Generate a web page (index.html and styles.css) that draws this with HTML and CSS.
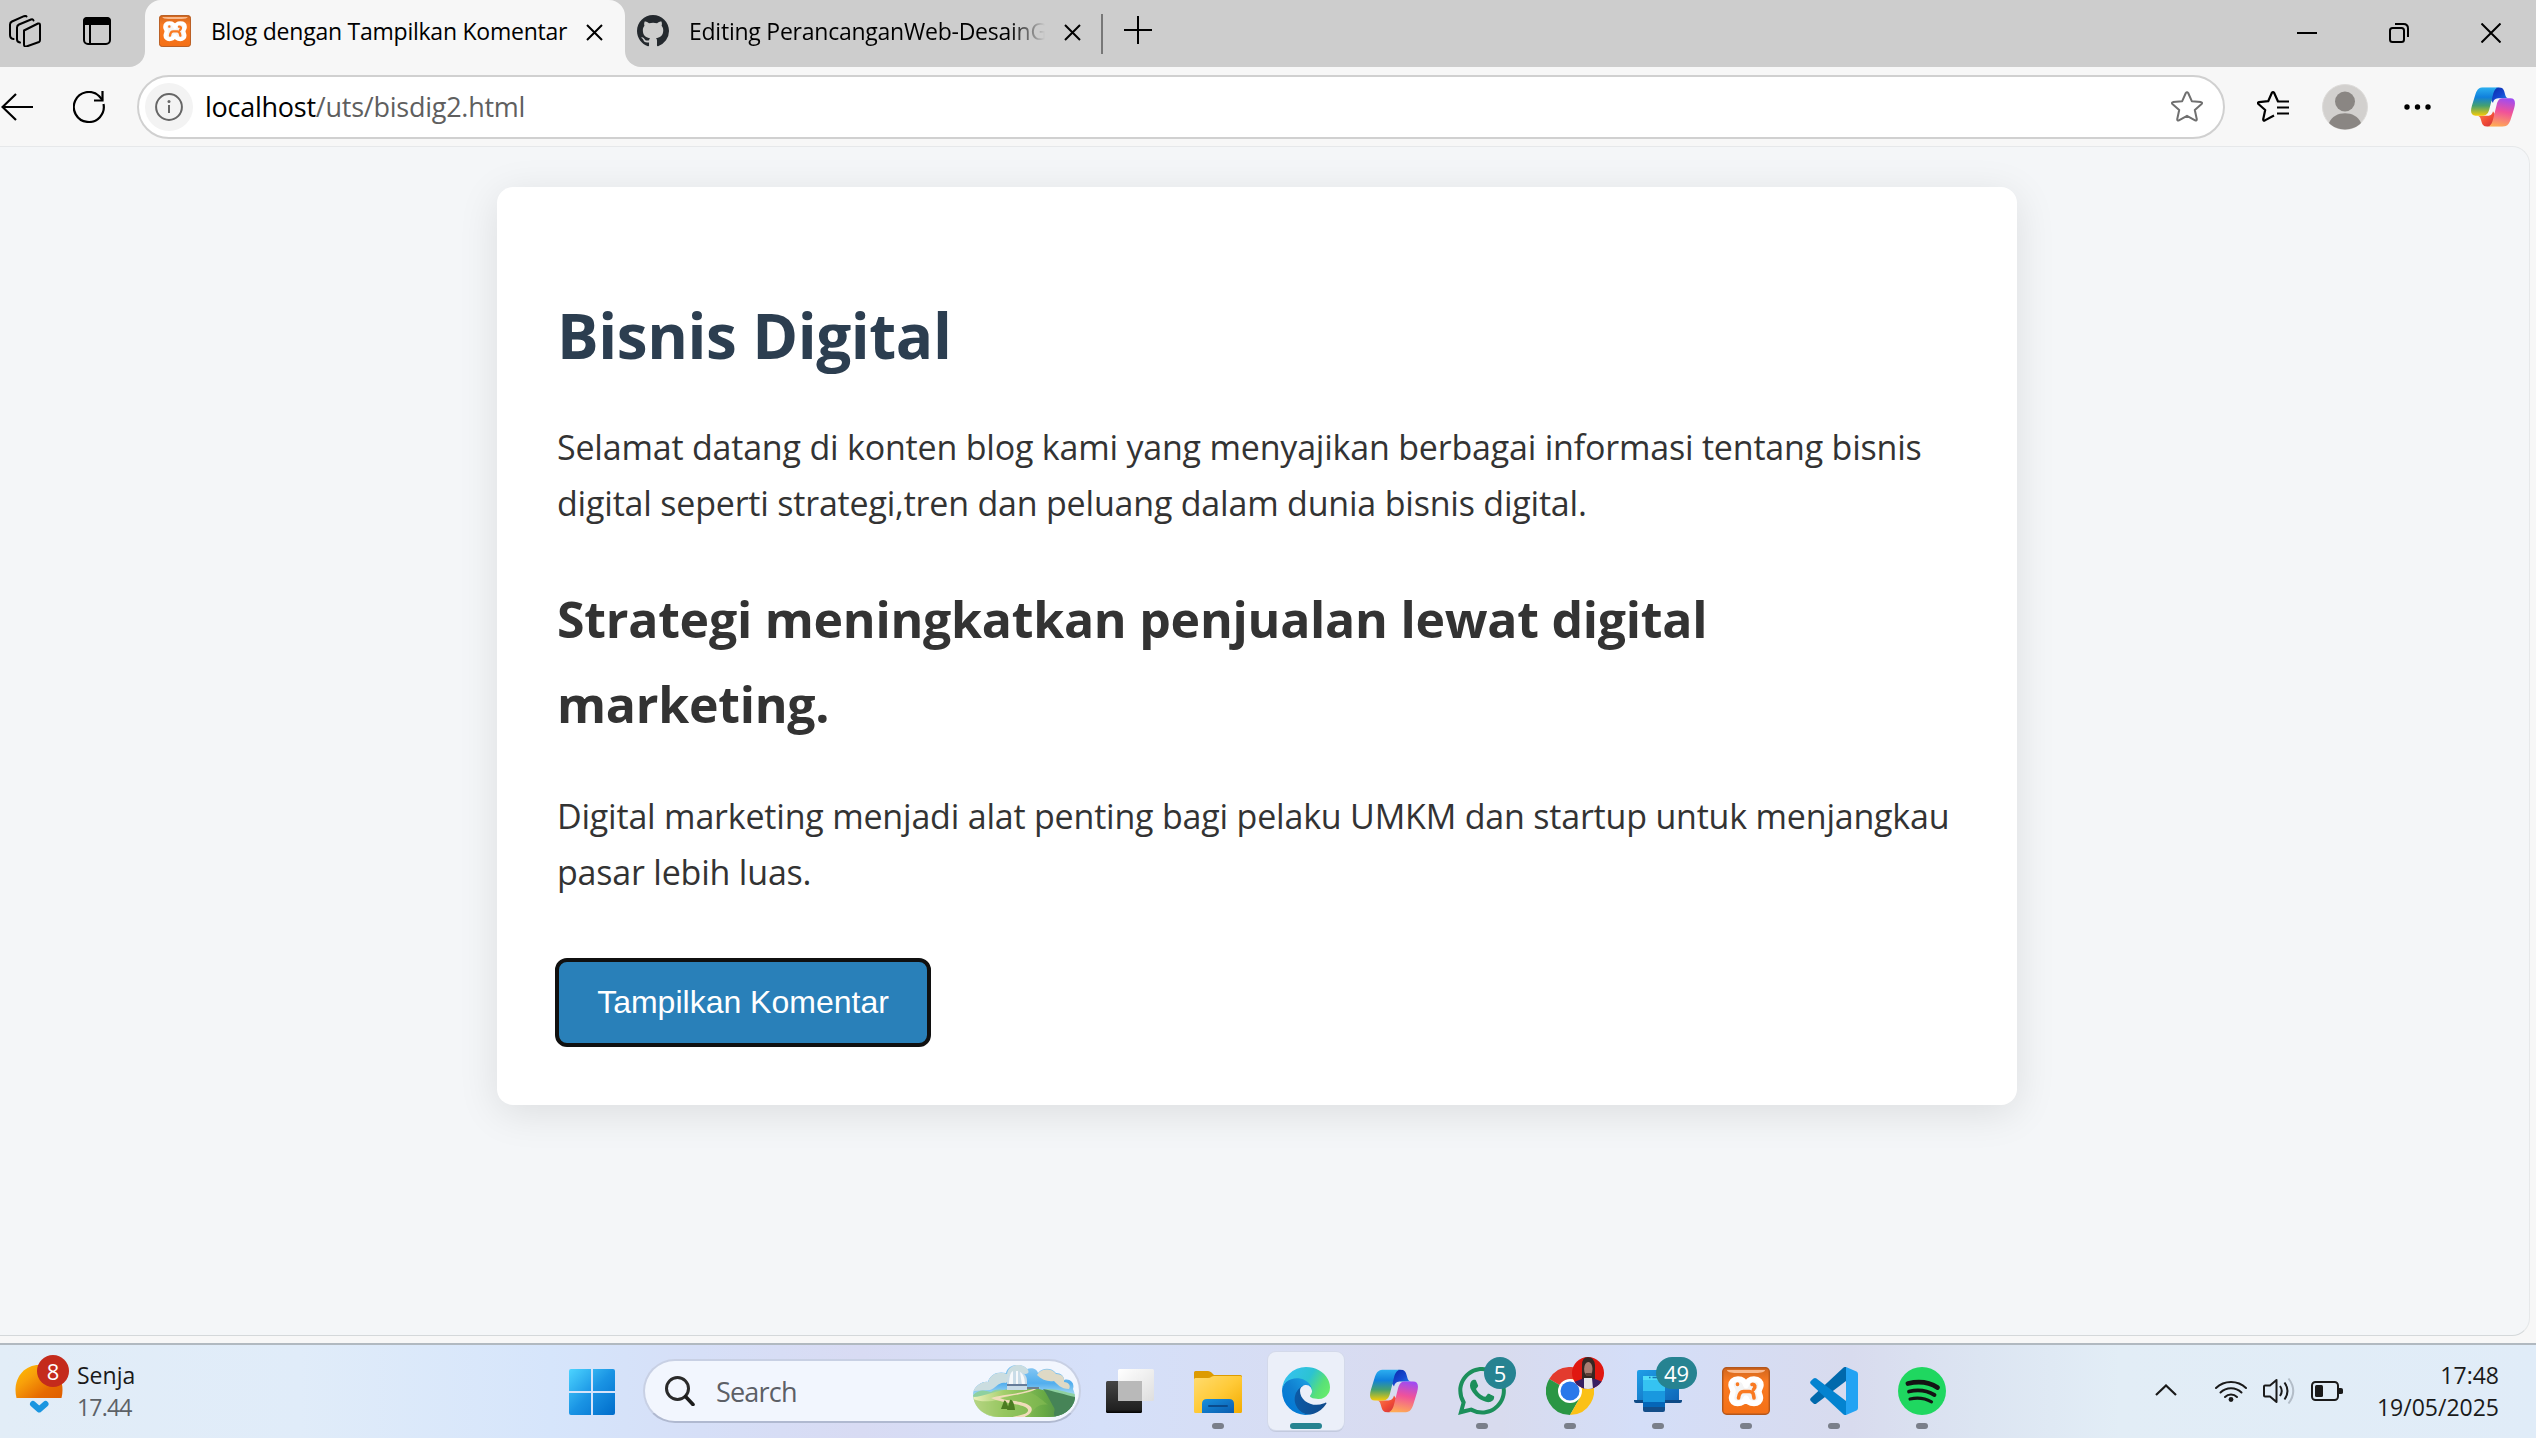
FILE: index.html
```html
<!DOCTYPE html>
<html lang="id">
<head>
<meta charset="utf-8">
<title>Blog dengan Tampilkan Komentar</title>
<link rel="stylesheet" href="styles.css">
</head>
<body>
<svg class="defs" aria-hidden="true">
  <defs>
    <linearGradient id="cpA" x1="0" y1="0" x2="0" y2="1"><stop offset="0" stop-color="#2cb0f0"/><stop offset=".35" stop-color="#1080dc"/><stop offset=".65" stop-color="#45a070"/><stop offset="1" stop-color="#f5cb08"/></linearGradient>
    <linearGradient id="cpB" x1="0" y1="0" x2="1" y2="1"><stop offset="0" stop-color="#0a2aa8"/><stop offset=".5" stop-color="#1547d0"/><stop offset="1" stop-color="#2a90f0"/></linearGradient>
    <linearGradient id="cpC" x1=".6" y1="0" x2=".4" y2="1"><stop offset="0" stop-color="#a14cf0"/><stop offset=".45" stop-color="#f0529a"/><stop offset="1" stop-color="#ffab55"/></linearGradient>
    <linearGradient id="cpD" x1="0" y1="0" x2="1" y2="1"><stop offset="0" stop-color="#ff8a50"/><stop offset=".6" stop-color="#f04a35"/><stop offset="1" stop-color="#c83040"/></linearGradient>
    <linearGradient id="xo" x1="0" y1="0" x2="0" y2="1"><stop offset="0" stop-color="#d0651c"/><stop offset=".3" stop-color="#f97a22"/><stop offset="1" stop-color="#f47016"/></linearGradient>
    <symbol id="copilot" viewBox="0 0 48 43">
      <path fill="url(#cpB)" d="M30 0C35 0 36 3 37 7s2 5 5 5H31c-4 0-6 1-7 5l-2-3C23 6 25 0 30 0z"/>
      <path fill="url(#cpD)" d="M18 43c-5 0-6-3-7-7s-2-5-5-5h11c4 0 6-1 7-5l2 3c-1 8-3 14-8 14z"/>
      <path fill="url(#cpA)" d="M14 0h17c-4 0-6 4-7 8l-4 16c-1 4-3 7-7 7H5c-5 0-6-4-4-11L5 7c2-5 4-7 9-7z"/>
      <path fill="url(#cpC)" d="M34 12h9c5 0 6 4 4 11l-4 13c-2 5-4 7-9 7H17c4 0 6-4 7-8l4-16c1-4 3-7 6-7z"/>
    </symbol>
    <symbol id="xampp" viewBox="0 0 48 48">
      <rect x=".7" y=".7" width="46.6" height="46.6" rx="4" fill="url(#xo)" stroke="#b4571c" stroke-width="1.4"/>
      <path d="M5 3h38c0 2-4 3-9 3H14C9 6 5 5 5 3z" fill="#f9b98c"/>
      <path d="M24 18.500c-1-4-4-6.500-8-6.500-5 0-7 3-7 6 0 2.500 2 4 2 6.500S9.500 28.500 9.500 31c0 3 2.500 5.500 6 5.500 4 0 7-1.500 8.500-5.500 1 4 4 5.500 8 5.500 4 0 6.500-2.500 6.500-5.500 0-2.500-1.500-4-1.500-6.500s2-4 2-6.500c0-3-2-6-7-6-4 0-7 2.500-8 6.500z" fill="#f4f4f4"/>
      <path d="M24 18.500c-1-4-4-6.500-8-6.500-5 0-7 3-7 6 0 2.500 2 4 2 6.500S9.500 28.500 9.500 31c0 3 2.500 5.500 6 5.500 4 0 7-1.500 8.500-5.500 1 4 4 5.500 8 5.500 4 0 6.500-2.500 6.500-5.500 0-2.500-1.500-4-1.500-6.500s2-4 2-6.500c0-3-2-6-7-6-4 0-7 2.500-8 6.500z" fill="none" stroke="#fff" stroke-width="5.500" stroke-linejoin="round"/>
      <path d="M15.500 17v.5M16.500 31c.5-4 1.500-6.500 5-6.500h6c4 0 4 3 4.500 6.500M30 17.500c3-.5 4 2.500 1.500 5" fill="none" stroke="#f97a22" stroke-width="3.600" stroke-linecap="round"/>
    </symbol>
  </defs>
</svg>

<header class="tabstrip">
  <div class="strip-left">
    <svg class="ico-workspaces" viewBox="0 0 32 32"><g fill="none" stroke="#000" stroke-width="2" stroke-linejoin="round" stroke-linecap="round"><path d="M15 15.500 29 8.500Q31 8 31 10V25q0 1.500-1 2L17.500 31.500Q15 32 15 29.500z"/><path d="M11 27.500Q8 27 8 24.500V12.500Q8 10.500 10 9.500L22 4.500q2-.8 2.500 1"/><path d="M4.500 24Q1 23.500 1 20V9.500Q1 7.500 3 6.500L15 1.200Q17 .6 17.500 1.500"/></g></svg>
    <svg class="ico-actions" viewBox="0 0 28 28"><rect x="1" y="1" width="26" height="26" rx="4" fill="none" stroke="#000" stroke-width="2"/><path d="M0 8V4a4 4 0 0 1 4-4h20a4 4 0 0 1 4 4v4z"/><path d="M7 8v19" stroke="#000" stroke-width="2"/></svg>
  </div>
  <div class="tab-slot">
    <div class="tab-active">
      <svg class="favicon" viewBox="0 0 48 48"><use href="#xampp"/></svg>
      <span class="tab-title">Blog dengan Tampilkan Komentar</span>
      <svg class="tab-close" viewBox="0 0 17 17"><path d="M1 1l15 15M16 1 1 16" stroke="#000" stroke-width="2"/></svg>
    </div>
  </div>
  <div class="strip-right">
    <svg class="favicon" viewBox="0 0 16 16"><path fill="#24292e" d="M8 0C3.580 0 0 3.580 0 8c0 3.540 2.290 6.530 5.470 7.590.4.070.55-.17.55-.38 0-.19-.01-.82-.01-1.490-2.010.37-2.530-.49-2.690-.94-.09-.23-.48-.94-.82-1.130-.28-.15-.68-.52-.01-.53.63-.01 1.080.58 1.230.82.72 1.210 1.870.87 2.330.66.070-.52.28-.87.51-1.070-1.780-.2-3.640-.89-3.640-3.950 0-.87.31-1.590.82-2.150-.08-.2-.36-1.020.08-2.120 0 0 .67-.21 2.200.82.64-.18 1.320-.27 2-.27s1.360.09 2 .27c1.530-1.040 2.200-.82 2.200-.82.44 1.100.16 1.920.08 2.120.51.56.82 1.270.82 2.150 0 3.070-1.870 3.750-3.650 3.950.29.25.54.73.54 1.480 0 1.070-.01 1.930-.01 2.200 0 .21.15.46.55.38A8.010 8.010 0 0 0 16 8c0-4.420-3.580-8-8-8z"/></svg>
    <span class="tab-title fade">Editing PerancanganWeb-DesainG</span>
    <svg class="tab-close" viewBox="0 0 17 17"><path d="M1 1l15 15M16 1 1 16" stroke="#000" stroke-width="2"/></svg>
    <span class="divider"></span>
    <svg class="ico-plus" viewBox="0 0 28 28"><path d="M14 0v28M0 14h28" stroke="#000" stroke-width="2"/></svg>
    <div class="window-controls">
      <svg viewBox="0 0 20 20"><path d="M0 10h20" stroke="#000" stroke-width="2"/></svg>
      <svg viewBox="0 0 20 20"><rect x="1" y="5" width="14" height="14" rx="2.500" fill="none" stroke="#000" stroke-width="2"/><path d="M6 1h8.500Q19 1 19 5.500V14" fill="none" stroke="#000" stroke-width="2"/></svg>
      <svg viewBox="0 0 20 20"><path d="M.5.5l19 19M19.500.5l-19 19" stroke="#000" stroke-width="2"/></svg>
    </div>
  </div>
</header>

<nav class="toolbar">
  <svg class="ico-back" viewBox="0 0 32 28"><path d="M32 14H1.500M15 1 1.500 14 15 27" fill="none" stroke="#000" stroke-width="2.200"/></svg>
  <svg class="ico-reload" viewBox="0 0 32 32"><path d="M30.500 13A15 15 0 1 1 26 5l3.500 4" fill="none" stroke="#000" stroke-width="2.200"/><path d="M29.500 0v9.500H21" fill="none" stroke="#000" stroke-width="2.200"/></svg>
  <div class="address">
    <span class="site-info"><svg viewBox="0 0 28 28"><circle cx="14" cy="14" r="12.900" fill="none" stroke="#666" stroke-width="2"/><path d="M14 12v8" stroke="#666" stroke-width="2"/><circle cx="14" cy="8.500" r="1.500" fill="#666"/></svg></span>
    <span class="url"><span class="host">localhost</span>/uts/bisdig2.html</span>
    <svg class="ico-star" viewBox="0 0 32 31"><path d="M14.800 2Q16 .4 17.200 2l3.600 8.200 9.200.9q1.800.5.6 1.900l-6.800 6 2 9.300q0 1.800-1.700 1.100L16 24.800 7.900 29.400q-1.700.7-1.700-1.100l2-9.300-6.800-6q-1.200-1.400.6-1.900l9.200-.9z" fill="none" stroke="#707070" stroke-width="2" stroke-linejoin="round"/></svg>
  </div>
  <svg class="ico-favs" viewBox="0 0 32 31"><path d="M17 24.500 7.900 29.400q-1.700.7-1.700-1.100l2-9.300-6.800-6q-1.200-1.400.6-1.900l9.200-.9L14.800 2Q16 .4 17.200 2l3.800 8.500H32M20 16.500h12M20 22.500h12" fill="none" stroke="#000" stroke-width="2.200" stroke-linejoin="round"/></svg>
  <svg class="ico-avatar" viewBox="0 0 46 46"><circle cx="23" cy="23" r="22.500" fill="#d2d0ce" stroke="#dddbd9"/><circle cx="23" cy="17.500" r="10" fill="#8a8683"/><path d="M7 39c5-13 27-13 32 0-8 8.500-24 8.500-32 0z" fill="#8a8683"/></svg>
  <svg class="ico-more" viewBox="0 0 28 6"><circle cx="3" cy="3" r="2.700"/><circle cx="13.500" cy="3" r="2.700"/><circle cx="24" cy="3" r="2.700"/></svg>
  <svg class="ico-copilot" viewBox="0 0 48 43"><use href="#copilot"/></svg>
</nav>

<div class="viewport">
  <main class="page">
    <article class="card">
      <h1>Bisnis Digital</h1>
      <p class="intro">Selamat datang di konten blog kami yang menyajikan berbagai informasi tentang bisnis digital seperti strategi,tren dan peluang dalam dunia bisnis digital.</p>
      <h2>Strategi meningkatkan penjualan lewat digital marketing.</h2>
      <p class="body">Digital marketing menjadi alat penting bagi pelaku UMKM dan startup untuk menjangkau pasar lebih luas.</p>
      <button class="toggle" type="button">Tampilkan Komentar</button>
    </article>
  </main>
</div>

<footer class="taskbar">
  <div class="weather">
    <div class="weather-icon">
      <svg viewBox="0 0 64 60"><defs><linearGradient id="sun" x1="0" y1="0" x2="1" y2=".9"><stop offset="0" stop-color="#ffc000"/><stop offset=".35" stop-color="#f8a00a"/><stop offset=".75" stop-color="#e66a00"/><stop offset="1" stop-color="#e06000"/></linearGradient></defs>
      <path d="M1.500 43C-3 25 8 10 24 10s27 15 22.500 33z" fill="url(#sun)"/><path d="M18 49l6.200 5.500L30.500 49" fill="none" stroke="#1b96e0" stroke-width="6" stroke-linecap="round" stroke-linejoin="round"/></svg>
      <span class="badge badge-red">8</span>
    </div>
    <div class="two-line"><span>Senja</span><span class="muted">17.44</span></div>
  </div>

  <svg class="start" viewBox="0 0 46 46"><defs><linearGradient id="win" gradientUnits="userSpaceOnUse" x1="0" y1="0" x2="46" y2="46"><stop offset="0" stop-color="#4cd4ff"/><stop offset=".5" stop-color="#1a94e4"/><stop offset="1" stop-color="#006cca"/></linearGradient></defs><path fill="url(#win)" d="M2 0h20v22H0V2Q0 0 2 0zM24 0h20q2 0 2 2v20H24zM0 24h22v22H2q-2 0-2-2zM24 24h22v20q0 2-2 2H24z"/></svg>

  <div class="search">
    <svg class="ico-search" viewBox="0 0 30 30"><circle cx="12.500" cy="12.500" r="11" fill="none" stroke="#2a2a2a" stroke-width="3"/><path d="M20.500 20.500l7.500 8" stroke="#1c1c1c" stroke-width="3.600" stroke-linecap="round"/></svg>
    <span>Search</span>
    <svg class="scene" viewBox="0 0 102 52">
      <defs>
        <clipPath id="sc"><path d="M0 28C2 20 10 16 15 17 17 9 25 6 33 8 35-2 50-2 54 4c5-2 10 0 11 4 5-6 14-5 18 0 5 0 8 3 8 7 6-2 11 3 9 9 2 4 2 8 2 10-2 10-12 18-26 18H26C11 52 0 42 0 28z"/></clipPath>
        <linearGradient id="sky" x1="0" y1="0" x2="0" y2="1"><stop offset="0" stop-color="#8ccaf4"/><stop offset=".35" stop-color="#52aeee"/><stop offset=".65" stop-color="#bfe6f2"/></linearGradient>
        <linearGradient id="hill" x1="0" y1="0" x2="1" y2="0"><stop offset="0" stop-color="#eef0bc"/><stop offset=".3" stop-color="#a4cf6c"/><stop offset=".7" stop-color="#67a944"/><stop offset="1" stop-color="#3f7a50"/></linearGradient>
      </defs>
      <g clip-path="url(#sc)">
        <path fill="url(#sky)" d="M0 0h102v52H0z"/>
        <path d="M0 26c4-10 10-9 15-9 2-9 12-11 19-8 2-12 19-11 21-4 2 4-2 5-7 3-8-1-10 6-15 10-7-2-10 5-16 7z" fill="#cbdde0"/>
        <path d="M64 10c4-7 15-7 19-1 7 0 9 4 8 8 5 0 7 4 5 7-8 0-12-5-15-8-6 1-12-1-17-6z" fill="#ded9c5"/>
        <path d="M0 30c8-7 12-4 18-3 8-5 14-1 22 0l14-3c10 3 14 2 20 0 10 0 18 3 28 5v23H0z" fill="#8ed0a0"/>
        <path d="M0 32c10 0 26-8 40-8h26c12 3 26 8 36 20v8H0z" fill="url(#hill)"/>
        <path d="M70 24c10 2 23 6 32 8v20H82c-3-6 2-6-2-11-4-7-6-12-10-17z" fill="#468457"/>
        <path d="M50 25c16 4 22 14 26 15-9-2-16 3-19 12H26C8 50 2 42 0 34c12 5 28 2 50-9z" fill="#8bbf55" opacity=".55"/>
        <path d="M64 22c-12 7-35 7-46 11 8 5 39 6 37 13-2 5-14 4-20 8h12c8-3 14-7 11-12-5-7-28-6-31-9 12-3 30-4 40-11z" fill="#f0dcba"/>
        <path d="M34 25v-9c0-13 20-13 20 0v9z" fill="#c9dce8"/><path d="M36 20c0-6 1-13 4-14v15zM47 7c4 2 5 8 5 13h-3zM43 6h2v14h-2z" fill="#f6f8fa"/><path d="M34 19h20v2H34z" fill="#667c9a"/><path d="M54 22h12v2H54z" fill="#6d8090"/>
        <path d="M31 36c2-2 3 3 5 8h-8zM37 35c2-2 5 5 5 10h-8z" fill="#4b7c21"/>
      </g>
    </svg>
  </div>

  <div class="apps">
    <div class="app"><svg viewBox="0 0 48 48"><defs><linearGradient id="tvd" x1="0" y1="0" x2="0" y2="1"><stop offset="0" stop-color="#454545"/><stop offset=".9" stop-color="#202020"/><stop offset="1" stop-color="#000"/></linearGradient><linearGradient id="tvl" x1="0" y1="0" x2="1" y2="1"><stop offset="0" stop-color="#fff"/><stop offset="1" stop-color="#dedede"/></linearGradient></defs><rect y="14" width="36" height="32" rx="1.500" fill="url(#tvd)"/><rect x="12" y="2" width="36" height="32" rx="1.500" fill="url(#tvl)"/><path d="M12 14h24v20H13.500q-1.500 0-1.500-1.500z" fill="#b9b9b9"/></svg></div>

    <div class="app running"><svg viewBox="0 0 48 48"><defs><linearGradient id="fd" x1="0" y1="0" x2="1" y2="1"><stop offset="0" stop-color="#ffdc70"/><stop offset=".5" stop-color="#ffca38"/><stop offset="1" stop-color="#f3ab00"/></linearGradient><linearGradient id="fb" x1="0" y1="0" x2="1" y2="1"><stop offset="0" stop-color="#1790de"/><stop offset="1" stop-color="#0a5cae"/></linearGradient></defs><path d="M0 14V5.500Q0 4 1.500 4H14q2 0 3.500 1.500L20 8h26.500q1.500 0 1.500 1.500V14z" fill="#dd9b00"/><path d="M0 12.500Q0 11 1.500 11H14q2 0 3.500-1.200T21 9h25.500q1.500 0 1.500 1.500v34q0 1.500-1.500 1.500h-45Q0 46 0 44.500z" fill="url(#fd)"/><path d="M8 46V37q0-5 5-5h22q5 0 5 5v9z" fill="url(#fb)"/><path d="M15 39h18" stroke="#0a4b8c" stroke-width="2" stroke-linecap="round"/></svg></div>

    <div class="app current"><svg viewBox="0 0 256 256"><defs><linearGradient id="e1" x1=".1" x2="1" y1=".7" y2=".7"><stop offset="0" stop-color="#0c59a4"/><stop offset="1" stop-color="#114a8b"/></linearGradient><linearGradient id="e2" x1=".9" y1=".2" x2=".2" y2=".9"><stop offset="0" stop-color="#1b9de2"/><stop offset=".5" stop-color="#1080d0"/><stop offset="1" stop-color="#0078d7"/></linearGradient><linearGradient id="e3" x1="0" y1=".3" x2="1" y2=".7"><stop offset="0" stop-color="#35c1f1"/><stop offset=".5" stop-color="#2cc3d2"/><stop offset=".8" stop-color="#58e078"/><stop offset="1" stop-color="#66eb6e"/></linearGradient></defs><g transform="translate(-4.630 -4.920)"><path fill="url(#e1)" d="M235.680 195.460a93.730 93.730 0 0 1-10.540 4.710 101.870 101.870 0 0 1-35.900 6.460c-47.320 0-88.540-32.550-88.540-74.320A31.480 31.480 0 0 1 117.130 105c-42.800 1.800-53.800 46.400-53.800 72.530 0 73.880 68.090 81.370 82.760 81.370 7.910 0 19.840-2.300 27-4.560l1.310-.44a128.340 128.340 0 0 0 66.600-52.800 4 4 0 0 0-5.320-5.640z"/><path fill="url(#e2)" d="M110.340 246.340A79.200 79.200 0 0 1 87.600 225a80.720 80.720 0 0 1 29.530-120c3.120-1.470 8.450-4.130 15.540-4a32.350 32.350 0 0 1 25.690 13 31.880 31.880 0 0 1 6.360 18.660c0-.21 24.460-79.600-80-79.600-43.900 0-80 41.660-80 78.210a130.150 130.150 0 0 0 12.110 56 128 128 0 0 0 156.380 67.110 75.550 75.550 0 0 1-62.780-8z"/><path fill="url(#e3)" d="M156.940 153.780c-.81 1.050-3.300 2.500-3.300 5.660 0 2.610 1.700 5.120 4.720 7.230 14.380 10 41.490 8.680 41.560 8.680a59.560 59.560 0 0 0 30.270-8.350 61.380 61.380 0 0 0 30.430-52.880c.26-22.410-8-37.310-11.340-43.910-21.190-41.450-66.930-65.290-116.670-65.290a128 128 0 0 0-128 126.200c.48-36.540 36.800-66.050 80-66.050 3.500 0 23.460.34 42 10.070 16.340 8.580 24.900 18.940 30.850 29.210 6.180 10.670 7.280 24.150 7.280 29.520s-2.740 13.330-7.800 19.910z"/></g></svg></div>

    <div class="app"><svg viewBox="0 0 48 43"><use href="#copilot"/></svg></div>

    <div class="app running"><svg viewBox="0 0 24 24"><path fill="#1c8f5b" d="M17.472 14.382c-.297-.149-1.758-.867-2.030-.967-.273-.099-.471-.148-.670.150-.197.297-.767.966-.940 1.164-.173.199-.347.223-.644.075-.297-.150-1.255-.463-2.390-1.475-.883-.788-1.480-1.761-1.653-2.059-.173-.297-.018-.458.130-.606.134-.133.298-.347.446-.520.149-.174.198-.298.298-.497.099-.198.050-.371-.025-.520-.075-.149-.669-1.612-.916-2.207-.242-.579-.487-.500-.669-.510-.173-.008-.371-.010-.570-.010-.198 0-.520.074-.792.372-.272.297-1.040 1.016-1.040 2.479 0 1.462 1.065 2.875 1.213 3.074.149.198 2.096 3.200 5.077 4.487.709.306 1.262.489 1.694.625.712.227 1.360.195 1.871.118.571-.085 1.758-.719 2.006-1.413.248-.694.248-1.289.173-1.413-.074-.124-.272-.198-.570-.347m-5.421 7.403h-.004a9.870 9.870 0 0 1-5.031-1.378l-.361-.214-3.741.982.998-3.648-.235-.374a9.860 9.860 0 0 1-1.510-5.260c.001-5.450 4.436-9.884 9.888-9.884 2.640 0 5.122 1.030 6.988 2.898a9.825 9.825 0 0 1 2.893 6.994c-.003 5.450-4.437 9.884-9.885 9.884m8.413-18.297A11.815 11.815 0 0 0 12.050 0C5.495 0 .160 5.335.157 11.892c0 2.096.547 4.142 1.588 5.945L.057 24l6.305-1.654a11.882 11.882 0 0 0 5.683 1.448h.005c6.554 0 11.890-5.335 11.893-11.893a11.821 11.821 0 0 0-3.480-8.413z"/></svg><span class="badge badge-teal">5</span></div>

    <div class="app running"><svg viewBox="0 0 48 48"><path d="M24 24 3.200 12A24 24 0 0 1 44.800 12z" fill="#e33b2e"/><path d="M3.200 12A24 24 0 0 0 24 48l10.400-18L24 24z" fill="#2a9644"/><path d="M24 48A24 24 0 0 0 44.800 12H24l10.400 18z" fill="#fbc116"/><path d="M3.200 12 13.600 30 24 24V12z" fill="#e33b2e" opacity="0"/><circle cx="24" cy="24" r="12" fill="#fff"/><circle cx="24" cy="24" r="9.500" fill="#2a78ea"/></svg>
      <svg class="profile" viewBox="0 0 32 32"><defs><clipPath id="pc"><circle cx="16" cy="16" r="16"/></clipPath></defs><g clip-path="url(#pc)"><path d="M0 0h32v32H0z" fill="#e01710"/><path d="M10 22V8q0-8 6-8t7 8v14z" fill="#352723"/><path d="M2 25l8-3h13l8 3v7H2z" fill="#371f63"/><path d="M12 21h8l1 11h-9z" fill="#e6e4ea"/><ellipse cx="16.300" cy="12" rx="4.200" ry="7" fill="#a97d72"/><path d="M13.500 16h6v3h-5z" fill="#5c3d36"/></g></svg></div>

    <div class="app running"><svg viewBox="0 0 48 48"><defs><linearGradient id="pl" x1="0" y1="0" x2="1" y2="1"><stop offset="0" stop-color="#1f9fe8"/><stop offset="1" stop-color="#0f66b8"/></linearGradient></defs><path d="M3 5q0-2 2-2h38q2 0 2 2v28H3z" fill="url(#pl)"/><path d="M0 33h48v1q0 2-2 2H2q-2 0-2-2z" fill="#0e4a86"/><path d="M9 9h22v15H9z" fill="#35c3f2"/><path d="M9 9h22v4H9z" fill="#4fdcf8"/><path d="M9 24h22v11H9z" fill="#1998df"/><path d="M9 35h22v5H9z" fill="#0566b8"/><path d="M9 40h22v3q0 2-2 2H11q-2 0-2-2z" fill="#134e8a"/><path d="M15 10.500h1.500M18.500 10.500H24" stroke="#1777b8" stroke-width="1.300"/></svg><span class="badge badge-teal badge-wide">49</span></div>

    <div class="app running"><svg viewBox="0 0 48 48"><use href="#xampp"/></svg></div>

    <div class="app running"><svg viewBox="0 0 48 48"><path d="M36 0v14L6.500 36.500q-1.500 1-3 0L.8 34q-1.300-1.500 0-3L33 1q1.500-1.300 3-1z" fill="#0069ac"/><path d="M36 48V34L6.500 11.500q-1.500-1-3 0L.8 14q-1.300 1.500 0 3L33 47q1.500 1.300 3 1z" fill="#0383d0"/><path d="M36 0l10.500 4.500Q48 5.300 48 7v34q0 1.700-1.500 2.500L36 48z" fill="#23a3f3"/></svg></div>

    <div class="app running"><svg viewBox="0 0 48 48"><circle cx="24" cy="24" r="24" fill="#1fd760"/><g fill="none" stroke="#141414" stroke-linecap="round"><path d="M10 16.500c11-2.500 21-1.500 29.500 4" stroke-width="4.800"/><path d="M11 24.500c9-2 18-1 25.500 3.500" stroke-width="3.800"/><path d="M12 32c8-1.800 15-.8 21.500 2.800" stroke-width="3.200"/></g></svg></div>
  </div>

  <div class="tray">
    <svg class="t-up" viewBox="0 0 22 12"><path d="M1 11 11 1.500 21 11" fill="none" stroke="#1a1a1a" stroke-width="2.200"/></svg>
    <svg class="t-wifi" viewBox="0 0 32 23"><g fill="none" stroke="#1a1a1a" stroke-width="2" stroke-linecap="round"><path d="M1 9a21.500 21.500 0 0 1 30 0"/><path d="M5.500 13.500a15 15 0 0 1 21 0"/><path d="M10 18a8.500 8.500 0 0 1 12 0"/></g><circle cx="16" cy="20.500" r="2.400" fill="#1a1a1a"/></svg>
    <svg class="t-vol" viewBox="0 0 32 28"><g fill="none" stroke="#1a1a1a" stroke-width="2" stroke-linejoin="round"><path d="M1 9.500q0-1 1-1h5L13.500 3v22L7 19.500H2q-1 0-1-1z"/><path d="M17 9q3.500 5 0 10M21.500 5.500q6 8.500 0 17"/><path d="M25.500 1.500q9.500 12.500 0 25" stroke="#b3bdc8"/></g></svg>
    <svg class="t-bat" viewBox="0 0 32 20"><rect x="1" y="1" width="26" height="18" rx="3.500" fill="none" stroke="#1a1a1a" stroke-width="2"/><rect x="4" y="4" width="8" height="12" rx="1.500" fill="#1a1a1a"/><path d="M28 7h2q2 0 2 1.500v3q0 1.500-2 1.500h-2z" fill="#1a1a1a"/></svg>
    <div class="two-line clock"><span>17:48</span><span>19/05/2025</span></div>
  </div>
</footer>
</body>
</html>
```
FILE: styles.css
```css
* { box-sizing: border-box; }
html, body { margin: 0; height: 100%; }
body {
  width: 2536px;
  height: 1438px;
  display: flex;
  flex-direction: column;
  overflow: hidden;
  background: #f7f7f7;
  color: #000;
  font-family: "Open Sans", "Noto Sans", sans-serif;
}
svg { display: block; flex: none; }
.defs { position: absolute; width: 0; height: 0; }

/* Tab strip */
.tabstrip { display: flex; height: 67px; flex: none; }
.strip-left {
  width: 145px;
  display: flex;
  align-items: flex-start;
  padding: 15px 0 0 9px;
  background: #cdcdcd;
  border-bottom-right-radius: 16px;
}
.ico-workspaces { width: 32px; height: 32px; }
.ico-actions { width: 28px; height: 28px; margin: 2px 0 0 42px; }
.tab-slot { width: 480px; background: linear-gradient(#cdcdcd 24px, #f7f7f7 24px); }
.tab-active {
  height: 67px;
  display: flex;
  align-items: flex-start;
  padding: 15px 0 0 14px;
  background: #f7f7f7;
  border-radius: 16px 16px 0 0;
}
.strip-right {
  flex: 1;
  display: flex;
  align-items: flex-start;
  padding: 15px 35px 0 12px;
  background: #cdcdcd;
  border-bottom-left-radius: 16px;
}
.favicon { width: 32px; height: 32px; }
.tab-title {
  width: 356px;
  margin-left: 20px;
  font-size: 23px;
  line-height: 32px;
  letter-spacing: -0.24px;
  white-space: nowrap;
}
.fade {
  overflow: hidden;
  -webkit-mask-image: linear-gradient(90deg, #000 calc(100% - 36px), transparent);
  mask-image: linear-gradient(90deg, #000 calc(100% - 36px), transparent);
}
.tab-close { width: 17px; height: 17px; margin: 9px 0 0 19px; }
.divider { width: 2px; height: 40px; margin: -1px 0 0 20px; background: #777; }
.ico-plus { width: 28px; height: 28px; margin: 1px 0 0 21px; }
.window-controls { display: flex; gap: 72px; margin: 8px 0 0 auto; }
.window-controls svg { width: 20px; height: 20px; }

/* Toolbar */
.toolbar { display: flex; align-items: center; height: 79px; flex: none; padding-left: 1px; }
.ico-back { width: 32px; height: 28px; }
.ico-reload { width: 32px; height: 32px; margin-left: 40px; }
.address {
  display: flex;
  align-items: center;
  width: 2088px;
  height: 64px;
  margin-left: 32px;
  padding: 0 20px 0 6px;
  background: #fff;
  border: 2px solid #d0d0d0;
  border-radius: 32px;
}
.site-info {
  display: flex;
  align-items: center;
  justify-content: center;
  width: 48px;
  height: 48px;
  border-radius: 50%;
  background: #f3f3f3;
}
.site-info svg { width: 28px; height: 28px; }
.url { margin-left: 12px; font-size: 27px; letter-spacing: -0.25px; color: #5f5f5f; }
.host { color: #000; }
.ico-star { width: 32px; height: 31px; margin-left: auto; }
.ico-favs { width: 32px; height: 31px; margin-left: 32px; }
.ico-avatar { width: 46px; height: 46px; margin-left: 33px; }
.ico-more { width: 28px; height: 6px; margin-left: 36px; }
.ico-copilot { width: 44px; height: 40px; margin-left: 39px; }

/* Web page */
.viewport { height: 1197px; flex: none; padding: 0 6px 7px 0; }
.page {
  height: 1190px;
  padding-top: 40px;
  background: #f4f6f8;
  border: solid #e6e8ea;
  border-width: 1px 1px 1px 0;
  border-bottom-color: #d4d8da;
  border-radius: 0 18px 18px 0;
}
.card {
  width: 1520px;
  height: 918px;
  margin-left: 497px;
  padding: 97px 60px 60px;
  background: #fff;
  border-radius: 16px;
  box-shadow: 0 8px 40px rgba(0, 0, 0, 0.1);
  color: #333;
}
h1 { margin: 0; font-size: 62px; line-height: 102px; letter-spacing: -0.4px; color: #2c3e50; }
h2 { margin: 45px 0 41px; font-size: 50px; line-height: 85px; letter-spacing: -0.25px; }
p { margin: 0; font-size: 34px; line-height: 56.300px; letter-spacing: -0.2px; }
.intro { margin-top: 33px; }
.toggle {
  display: block;
  width: 372px;
  height: 85px;
  margin-top: 60px;
  padding: 0;
  border: 0;
  border-radius: 10px;
  outline: 4px solid #101010;
  outline-offset: -2px;
  background: #2980b9;
  color: #fff;
  font: 32px "Liberation Sans", sans-serif;
}

/* Taskbar */
.taskbar {
  display: flex;
  flex: 1;
  align-items: flex-start;
  border-top: 2px solid #b1b9c0;
  background: linear-gradient(90deg, #e2edf7 0, #e0ecf9 300px, #d6e5fb 550px, #d6dff7 700px, #d8dbf3 860px, #d5e0f9 1100px, #d8dbf0 1400px, #d8dbee 1500px, #d4def8 1640px, #d8dbee 1850px, #dce5f2 1980px, #e2edf6 2120px, #e0ecf8 100%);
}
.weather { display: flex; width: 569px; padding-left: 15px; }
.weather-icon { position: relative; width: 64px; height: 60px; margin-top: 10px; }
.weather-icon svg { width: 64px; height: 60px; }
.badge {
  position: absolute;
  display: flex;
  align-items: center;
  justify-content: center;
  width: 32px;
  height: 32px;
  border-radius: 16px;
  color: #fff;
  font-size: 22px;
  line-height: 32px;
}
.badge-red { left: 22px; top: 0; background: #c42b1c; }
.badge-teal { left: 26px; top: -10px; background: #268391; }
.badge-wide { left: 22px; width: 41px; }
.two-line {
  display: flex;
  flex-direction: column;
  margin-top: 14px;
  font-size: 23px;
  line-height: 32px;
  color: #1a1a1a;
}
.weather .two-line { margin-left: -2px; }
.muted { color: #5c6166; letter-spacing: -0.8px; }
.start { width: 46px; height: 46px; margin-top: 24px; }
.search {
  display: flex;
  align-items: center;
  width: 438px;
  height: 64px;
  margin: 14px 0 0 28px;
  padding: 0 4px 0 20px;
  border: 2px solid #c8d0e4;
  border-bottom-color: #b0b9d0;
  border-radius: 32px;
  background: #f2f6fe;
  color: #5c5f66;
  font-size: 27px;
  letter-spacing: -0.8px;
}
.ico-search { width: 30px; height: 30px; margin-right: 21px; }
.scene { width: 102px; height: 52px; margin-left: auto; }
.apps { display: flex; gap: 12px; margin: 7px 0 0 11px; }
.app {
  position: relative;
  width: 76px;
  height: 78px;
  padding: 15px 14px 0;
  border-radius: 8px;
}
.app > svg { width: 48px; height: 48px; }
.app .badge { left: 40px; top: 5px; }
.app .badge-wide { left: 36px; }
.app .profile { position: absolute; left: 40px; top: 5px; width: 32px; height: 32px; }
.running::after, .current::after {
  content: "";
  position: absolute;
  left: 32px;
  top: 71px;
  width: 12px;
  height: 6px;
  border-radius: 3px;
  background: #7a7f8a;
}
.current { background: #ebeff9; box-shadow: 0 0 0 1px #d3d9ea, 0 2px 0 #c3cade; }
.current::after { left: 22px; width: 32px; background: #268391; }
.tray { display: flex; margin-left: auto; padding-right: 37px; }
.t-up { width: 22px; height: 12px; margin: 39px 38px 0 0; }
.t-wifi { width: 32px; height: 23px; margin: 34px 16px 0 0; }
.t-vol { width: 32px; height: 28px; margin: 32px 16px 0 0; }
.t-bat { width: 32px; height: 20px; margin: 36px 34px 0 0; }
.clock { align-items: flex-end; }
```
